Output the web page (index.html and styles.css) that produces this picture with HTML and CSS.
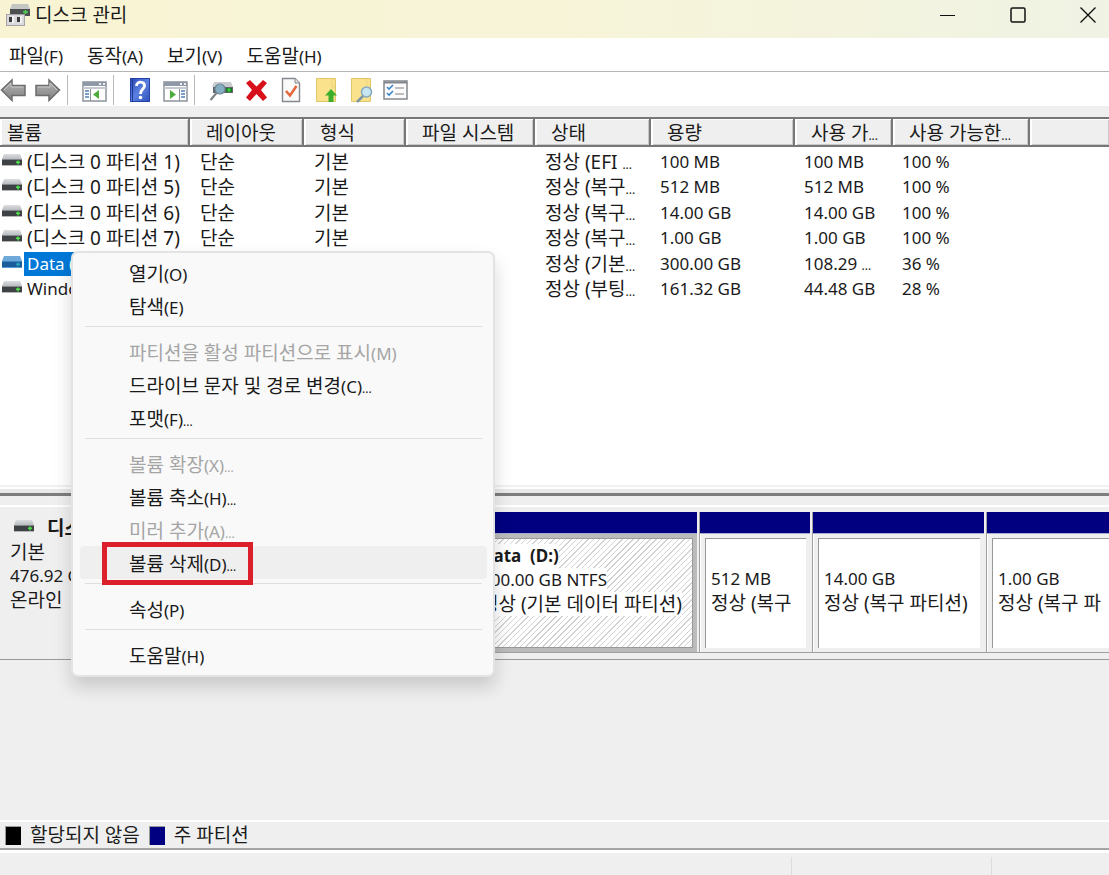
FILE: index.html
```html
<!DOCTYPE html>
<html lang="ko">
<head>
<meta charset="utf-8">
<title>디스크 관리</title>
<link rel="stylesheet" href="styles.css">
</head>
<body>
<svg class="defs" aria-hidden="true">
  <defs>
    <linearGradient id="lid" x1="0" y1="0" x2="0" y2="1"><stop offset="0" stop-color="#dcdee0"/><stop offset="1" stop-color="#b9bcc0"/></linearGradient>
    <linearGradient id="arrow" x1="0" y1="0" x2="0" y2="1"><stop offset="0" stop-color="#b5b5b5"/><stop offset="1" stop-color="#808080"/></linearGradient>
    <linearGradient id="book" x1="0" y1="0" x2="1" y2="1"><stop offset="0" stop-color="#2c49b4"/><stop offset=".5" stop-color="#5b80e0"/><stop offset="1" stop-color="#2e50bb"/></linearGradient>
    <symbol id="drive" viewBox="0 0 20 12">
      <path d="M2 0H18L20 5H0Z" fill="url(#lid)"/>
      <rect y="5" width="20" height="6" fill="#3f4244"/>
      <rect y="5" width="20" height="1" fill="#85888b"/>
      <rect y="11" width="20" height="1" fill="#b5b5b5"/>
      <path d="M14 8.300h4M16 6.500v4" stroke="#4ee04b" stroke-width="1.500"/>
    </symbol>
    <symbol id="drive-selected" viewBox="0 0 20 12">
      <path d="M2 0H18L20 5H0Z" fill="#6fa9da"/>
      <rect y="5" width="20" height="6" fill="#1b5c9b"/>
      <rect y="5" width="20" height="1" fill="#3e86c4"/>
      <rect y="11" width="20" height="1" fill="#5a9ad2"/>
      <path d="M14 8.300h4M16 6.500v4" stroke="#2aa6bb" stroke-width="1.500"/>
    </symbol>
  </defs>
</svg>
<div class="window">
  <header class="titlebar">
    <svg class="app-icon" viewBox="0 0 24 24" aria-hidden="true">
      <path d="M6 1H22L24 6H4Z" fill="#c3c6c2"/><rect x="4" y="6" width="20" height="7" fill="#4b4f50"/>
      <path d="M17 9h5M19.500 7v4" stroke="#4bd54a" stroke-width="1.500"/>
      <rect x=".5" y="11.500" width="18" height="11" fill="#d9d9dc" stroke="#a3a3a8"/>
      <rect x="3" y="14" width="4" height="5" fill="#3a3a3c"/><rect x="11" y="14" width="4" height="5" fill="#3a3a3c"/>
      <rect x="6" y="13" width="2" height="7" fill="#f4f4f4"/><rect x="14" y="13" width="2" height="7" fill="#f4f4f4"/>
    </svg>
    <h1 class="title">디스크 관리</h1>
    <div class="window-buttons">
      <button aria-label="최소화"><svg viewBox="0 0 16 16"><path d="M0 8.500H15" stroke="#111"/></svg></button>
      <button aria-label="최대화"><svg viewBox="0 0 16 16"><rect x="1" y="1" width="14" height="14" rx="1.500" fill="none" stroke="#111" stroke-width="1.500"/></svg></button>
      <button aria-label="닫기"><svg viewBox="0 0 16 16"><path d="M.5.5l15 15M15.500.5l-15 15" stroke="#111" stroke-width="1.400"/></svg></button>
    </div>
  </header>

  <nav class="menubar">
    <button>파일<span class="key">(F)</span></button>
    <button>동작<span class="key">(A)</span></button>
    <button>보기<span class="key">(V)</span></button>
    <button>도움말<span class="key">(H)</span></button>
  </nav>

  <div class="toolbar">
    <div class="tool-group">
      <button aria-label="뒤로"><svg viewBox="0 0 26 26"><path d="M1.500 13L12 3V8.500H25V18.500H12V23.500Z" fill="url(#arrow)" stroke="#6c6c6c" stroke-width="1.500"/><path d="M4 13L11 6V10H23.500" fill="none" stroke="#c7c7c7"/></svg></button>
      <button aria-label="앞으로"><svg viewBox="0 0 26 26"><path d="M24.500 13L14 3V8.500H1V18.500H14V23.500Z" fill="url(#arrow)" stroke="#6c6c6c" stroke-width="1.500"/><path d="M22 13L15 6V10H2.500" fill="none" stroke="#c7c7c7"/></svg></button>
    </div>
    <div class="tool-group">
      <button aria-label="콘솔 트리 표시"><svg viewBox="0 0 26 26"><rect x="2" y="5" width="23" height="19" fill="#fff" stroke="#8c929b" stroke-width="1.500"/><rect x="2" y="5" width="23" height="4" fill="#8f98a6"/><path d="M18 7h2M22 7h2" stroke="#eee" stroke-width="2"/><path d="M2 11h23" stroke="#c4c9d0" stroke-width="2"/><path d="M9.500 12v12" stroke="#8c929b"/><path d="M4 14h4M4 17h4M4 20h4" stroke="#537fb5" stroke-width="1.500"/><path d="M18 13v9l-6-4.500z" fill="#4cad39"/></svg></button>
    </div>
    <div class="tool-group">
      <button aria-label="도움말"><svg viewBox="0 0 26 26"><rect x="3.500" y="1.500" width="19" height="23" fill="url(#book)" stroke="#2545a4"/><path d="M5.500 1.500v23" stroke="#1f3c96"/><path d="M9.500 9C9.500 3.500 18 4 17.500 9C17.300 12 13.500 12.500 13.500 17" fill="none" stroke="#fff" stroke-width="2.800"/><circle cx="13.500" cy="20.500" r="1.800" fill="#fff"/></svg></button>
      <button aria-label="작업 창 표시"><svg viewBox="0 0 26 26"><rect x="2" y="5" width="23" height="19" fill="#fff" stroke="#8c929b" stroke-width="1.500"/><rect x="2" y="5" width="23" height="4" fill="#8f98a6"/><path d="M18 7h2M22 7h2" stroke="#eee" stroke-width="2"/><path d="M2 11h23" stroke="#c4c9d0" stroke-width="2"/><path d="M17.500 12v12" stroke="#8c929b"/><path d="M19 14h4M19 17h4M19 20h4" stroke="#537fb5" stroke-width="1.500"/><path d="M8 13v9l6-4.500z" fill="#4cad39"/></svg></button>
    </div>
    <div class="tool-group">
      <button aria-label="디스크 다시 검사"><svg viewBox="0 0 26 26"><path d="M6 5H23L25 10H4Z" fill="#c9cccf"/><rect x="5" y="10" width="20" height="6" fill="#61676b"/><rect x="18" y="11" width="6" height="4" fill="#17752a"/><path d="M19 13h4M21 11v4" stroke="#3fe03a" stroke-width="1.200"/><circle cx="12" cy="12" r="5" fill="#86aec2" stroke="#6c8797" stroke-width="1.200"/><path d="M8.500 16L2.500 23" stroke="#7d8488" stroke-width="2.200"/></svg></button>
      <button aria-label="삭제"><svg viewBox="0 0 26 26"><path d="M3 6L7 3L13.500 9.500L20 3L24 6L18 13L24 20.500L20 24L13.500 17L7 24L3 20.500L9 13Z" fill="#d8101c"/></svg></button>
      <button aria-label="속성"><svg viewBox="0 0 26 26"><path d="M4.500 1.500H17L21.500 6V24.500H4.500Z" fill="#fafafa" stroke="#85888c" stroke-width="1.400"/><path d="M17 1.500V6H21.500" fill="#ddd" stroke="#85888c"/><path d="M8 14l4 4.500L18.500 9" fill="none" stroke="#e5663a" stroke-width="2.500"/></svg></button>
      <button aria-label="위로"><svg viewBox="0 0 26 26"><path d="M3.500 1.500H22.500V24.500H3.500Z" fill="#fae28d" stroke="#dfc66b"/><path d="M19 2v8h3" fill="none" stroke="#edd27a"/><path d="M18 12l6 6.500h-3.500V25h-5v-6.500H12z" fill="#3dae2c"/></svg></button>
      <button aria-label="찾기"><svg viewBox="0 0 26 26"><path d="M3.500 1.500H22.500V24.500H3.500Z" fill="#fae28d" stroke="#dfc66b"/><path d="M19 2v6" stroke="#edd27a"/><circle cx="18.500" cy="15" r="5" fill="#c7e5f3" stroke="#85a8bd" stroke-width="1.500"/><path d="M15 19l-6 6" stroke="#7d97a7" stroke-width="2.500"/></svg></button>
      <button aria-label="설정"><svg viewBox="0 0 26 26"><rect x="1" y="4" width="23" height="18" fill="#fbfbfb" stroke="#84888e" stroke-width="1.500"/><path d="M1 5.500h23" stroke="#84888e" stroke-width="2"/><path d="M4 10l2 2 4-4M4 16l2 2 4-4" fill="none" stroke="#3c87cb" stroke-width="1.600"/><path d="M12 11h9M12 17h9" stroke="#aaa" stroke-width="1.500"/></svg></button>
    </div>
  </div>

  <main class="content">
    <section class="volumes">
      <table class="volume-table">
        <colgroup><col class="w-name"><col class="w-layout"><col class="w-type"><col class="w-fs"><col class="w-status"><col class="w-size"><col class="w-free"><col class="w-pct"><col></colgroup>
        <thead><tr><th>볼륨</th><th>레이아웃</th><th>형식</th><th>파일 시스템</th><th>상태</th><th>용량</th><th>사용 가<span class="dots">...</span></th><th>사용 가능한<span class="dots">...</span></th><th></th></tr></thead>
        <tbody>
          <tr><td><span class="name"><svg class="drive"><use href="#drive"/></svg><span>(디스크 0 파티션 1)</span></span></td><td>단순</td><td>기본</td><td></td><td>정상 (EFI <span class="dots">...</span></td><td class="num">100 MB</td><td class="num">100 MB</td><td class="num">100 %</td><td></td></tr>
          <tr><td><span class="name"><svg class="drive"><use href="#drive"/></svg><span>(디스크 0 파티션 5)</span></span></td><td>단순</td><td>기본</td><td></td><td>정상 (복구<span class="dots">...</span></td><td class="num">512 MB</td><td class="num">512 MB</td><td class="num">100 %</td><td></td></tr>
          <tr><td><span class="name"><svg class="drive"><use href="#drive"/></svg><span>(디스크 0 파티션 6)</span></span></td><td>단순</td><td>기본</td><td></td><td>정상 (복구<span class="dots">...</span></td><td class="num">14.00 GB</td><td class="num">14.00 GB</td><td class="num">100 %</td><td></td></tr>
          <tr><td><span class="name"><svg class="drive"><use href="#drive"/></svg><span>(디스크 0 파티션 7)</span></span></td><td>단순</td><td>기본</td><td></td><td>정상 (복구<span class="dots">...</span></td><td class="num">1.00 GB</td><td class="num">1.00 GB</td><td class="num">100 %</td><td></td></tr>
          <tr><td><span class="name selected"><svg class="drive"><use href="#drive-selected"/></svg><span class="num">Data (D:)</span></span></td><td></td><td></td><td></td><td>정상 (기본<span class="dots">...</span></td><td class="num">300.00 GB</td><td class="num">108.29 <span class="dots">...</span></td><td class="num">36 %</td><td></td></tr>
          <tr><td><span class="name"><svg class="drive"><use href="#drive"/></svg><span class="num">Windows</span></span></td><td></td><td></td><td></td><td>정상 (부팅<span class="dots">...</span></td><td class="num">161.32 GB</td><td class="num">44.48 GB</td><td class="num">28 %</td><td></td></tr>
        </tbody>
      </table>
    </section>

    <div class="splitter"></div>

    <section class="disks">
      <div class="disk">
        <div class="disk-label">
          <strong><svg class="drive"><use href="#drive"/></svg>디스크 0</strong>
          <span>기본</span><span class="num">476.92 GB</span><span>온라인</span>
        </div>
        <div class="partition p-efi"><div class="bar"></div><div class="part-body"></div></div>
        <div class="partition p-win"><div class="bar"></div><div class="part-body"></div></div>
        <div class="partition p-data active"><div class="bar"></div><div class="part-body"><b class="num">Data&nbsp; (D:)</b><span class="num">300.00 GB NTFS</span><span>정상 (기본 데이터 파티션)</span></div></div>
        <div class="partition p-512"><div class="bar"></div><div class="part-body"><span class="num">512 MB</span><span>정상 (복구</span></div></div>
        <div class="partition p-14"><div class="bar"></div><div class="part-body"><span class="num">14.00 GB</span><span>정상 (복구 파티션)</span></div></div>
        <div class="partition p-last"><div class="bar"></div><div class="part-body"><span class="num">1.00 GB</span><span>정상 (복구 파</span></div></div>
      </div>
    </section>

    <div class="context-menu" role="menu">
      <button role="menuitem">열기<span class="key">(O)</span></button>
      <button role="menuitem">탐색<span class="key">(E)</span></button>
      <hr>
      <button role="menuitem" disabled>파티션을 활성 파티션으로 표시<span class="key">(M)</span></button>
      <button role="menuitem">드라이브 문자 및 경로 변경<span class="key">(C)</span><span class="dots">...</span></button>
      <button role="menuitem">포맷<span class="key">(F)</span><span class="dots">...</span></button>
      <hr>
      <button role="menuitem" disabled>볼륨 확장<span class="key">(X)</span><span class="dots">...</span></button>
      <button role="menuitem">볼륨 축소<span class="key">(H)</span><span class="dots">...</span></button>
      <button role="menuitem" disabled>미러 추가<span class="key">(A)</span><span class="dots">...</span></button>
      <button role="menuitem" class="hovered">볼륨 삭제<span class="key">(D)</span><span class="dots">...</span></button>
      <hr>
      <button role="menuitem">속성<span class="key">(P)</span></button>
      <hr>
      <button role="menuitem">도움말<span class="key">(H)</span></button>
    </div>
  </main>

  <div class="legend">
    <span class="swatch unallocated"></span><span>할당되지 않음</span>
    <span class="swatch primary"></span><span>주 파티션</span>
  </div>
  <footer class="statusbar"><div></div><div></div><div></div></footer>
</div>
</body>
</html>
```

FILE: styles.css
```css
*, *::after { box-sizing: border-box; }
body {
  margin: 0;
  background: #efefef;
  color: #1a1a1a;
  font: 19px/24px "Noto Sans", "Noto Sans CJK KR", sans-serif;
}
button {
  border: 0;
  padding: 0;
  background: none;
  color: inherit;
  font: inherit;
}
svg { display: block; }
.defs { position: absolute; width: 0; height: 0; }
.num { font-size: 17px; }
.key { font-size: 17px; line-height: 1; }
.dots { font-size: 12px; line-height: 1; }

.window {
  display: flex;
  flex-direction: column;
  min-height: 100vh;
  overflow: hidden;
}

.titlebar {
  display: flex;
  align-items: center;
  height: 38px;
  padding: 0 13px 8px 6px;
  background: linear-gradient(90deg, #f8f4d3, #f7f4d8 50%, #f0f3e4);
}
.app-icon { width: 24px; height: 24px; }
.title { flex: 1; margin: 0 0 0 5px; font-size: 19px; font-weight: 400; }
.window-buttons { display: flex; gap: 54px; }
.window-buttons svg { width: 16px; height: 16px; }

.menubar {
  display: flex;
  gap: 24px;
  height: 34px;
  padding: 2px 9px 0;
  background: #fff;
  border-bottom: 1px solid #b5b5b5;
}

.toolbar {
  display: flex;
  align-items: center;
  height: 34px;
  padding-top: 2px;
  background: #fff;
}
.tool-group {
  display: flex;
  gap: 9px;
  margin-right: 13px;
  padding: 2px 6px 2px 0;
  border-right: 1px solid #b9b9b9;
}
.tool-group:last-child { border: 0; }
.toolbar svg { width: 26px; height: 26px; }

.content {
  position: relative;
  display: flex;
  flex: 1;
  flex-direction: column;
  padding-top: 11px;
}
.volumes {
  min-height: 368px;
  background: #fff;
  border-top: 2px solid #777;
}
.volume-table {
  width: 100%;
  table-layout: fixed;
  border-collapse: separate;
  border-spacing: 0;
}
.w-name { width: 190px; }
.w-layout { width: 114px; }
.w-type { width: 102px; }
.w-fs { width: 129px; }
.w-status { width: 116px; }
.w-size { width: 144px; }
.w-free { width: 98px; }
.w-pct { width: 137px; }
th {
  height: 28px;
  padding: 1px 0 0 16px;
  background: #efefef;
  border: solid #777;
  border-width: 0 2px 2px 0;
  box-shadow: inset 2px 1px #fff, inset -1px -1px #c9c9c9;
  font-weight: 400;
  text-align: left;
  white-space: nowrap;
}
th:first-child { padding-left: 7px; }
th:last-child { border-right: 0; }
td {
  height: 25px;
  padding: 0 0 0 10px;
  overflow: hidden;
  white-space: nowrap;
}
td.num { padding-left: 9px; }
tbody tr:nth-child(even) td { height: 26px; }
tbody tr:first-child td { height: 27px; padding-top: 2px; }
td:first-child { padding-left: 2px; }
.name { display: flex; align-items: center; gap: 2px; }
.name > span { padding: 0 3px; }
.drive { flex: none; width: 20px; height: 12px; margin-bottom: 4px; }
.selected > span { width: 78px; background: #0078d7; color: #fff; }

.splitter {
  height: 11px;
  background: #e9e9e9;
  border-top: 2px solid #f1f1f1;
  border-bottom: 3px solid #7d7d7d;
  box-shadow: inset 0 2px #fff;
}

.disks { flex: 1; padding-top: 9px; border-bottom: 2px solid #fff; }
.disk {
  display: flex;
  height: 155px;
  padding-top: 5px;
  border-top: 2px solid #fff;
  border-bottom: 1px solid #999;
  white-space: nowrap;
}
.disk-label {
  display: flex;
  flex: none;
  flex-direction: column;
  width: 184px;
  padding: 4px 10px;
}
.disk-label strong { display: flex; align-items: center; gap: 13px; padding-left: 4px; }
.partition {
  display: flex;
  flex: none;
  flex-direction: column;
  height: 141px;
  padding-right: 3px;
  border-bottom: 1px solid #a0a0a0;
}
.p-efi { width: 94px; }
.p-win { width: 192px; }
.p-data { width: 230px; }
.p-512 { width: 113px; }
.p-14 { width: 174px; }
.p-last { flex: 1; min-width: 0; padding-right: 0; }
.partition + .partition { box-shadow: inset 1px 0 #fff, -1px 0 #a0a0a0; }
.bar { height: 22px; background: #000080; border-bottom: 1px solid #aaaacb; }
.part-body {
  display: flex;
  flex: 1;
  flex-direction: column;
  justify-content: center;
  align-items: flex-start;
  margin: 4px 4px 4px 5px;
  padding: 0 0 6px 5px;
  background: #fff;
  border: solid #999;
  border-width: 1px 0 0 1px;
  overflow: hidden;
}
.p-last .part-body { margin-right: 0; }
.partition.active { background: #bbb; box-shadow: inset -3px 0 #efefef; }
.active .part-body {
  justify-content: flex-start;
  padding-top: 5px;
  border-width: 1px;
  background: repeating-linear-gradient(135deg, #fff 0 3px, #d3d3d3 3px 4px);
}
.active .part-body > * { background: #fff; }

.context-menu {
  position: absolute;
  left: 71px;
  top: 145px;
  width: 424px;
  padding: 3px 6px 4px 7px;
  background: #f9f9f9;
  border: 2px solid #e3e3e3;
  border-radius: 7px;
  box-shadow: 0 10px 18px rgba(0, 0, 0, .16);
}
.context-menu button {
  display: block;
  position: relative;
  width: 100%;
  height: 33px;
  padding: 2px 0 0 49px;
  border-radius: 4px;
  text-align: left;
}
.context-menu button:disabled { color: #a5a5a5; }
.context-menu hr {
  height: 1px;
  margin: 4px 5px 8px;
  border: 0;
  background: #dedede;
}
.context-menu .hovered { background: #efefef; }
.hovered::after {
  content: "";
  position: absolute;
  left: 22px;
  top: -4px;
  width: 151px;
  height: 43px;
  border: 5px solid #dc202b;
}

.legend {
  display: flex;
  align-items: center;
  gap: 9px;
  height: 28px;
  padding-left: 5px;
  border-bottom: 2px solid #a5a5a5;
}
.swatch {
  width: 16px;
  height: 19px;
  border: solid #999;
  border-width: 1px 0 0 1px;
}
.unallocated { background: #000; }
.primary { background: #000080; }

.statusbar {
  display: grid;
  grid-template-columns: 1fr 200px 118px;
  height: 25px;
  padding-top: 4px;
  border-top: 3px solid #fff;
}
.statusbar div + div { border-left: 1px solid #dcdcdc; }
```
